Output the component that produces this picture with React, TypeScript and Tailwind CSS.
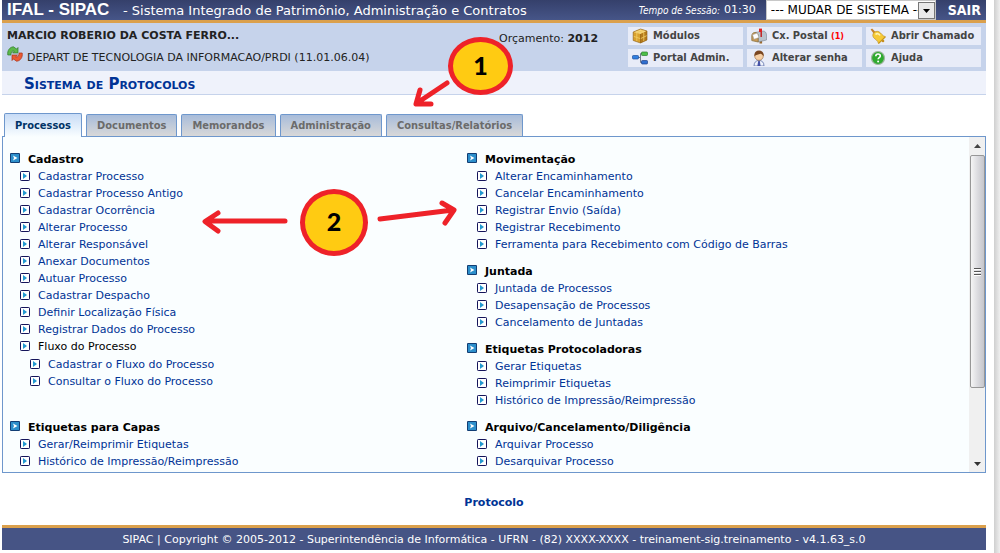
import type { ReactNode } from "react";

type MenuItem = {
  label: string;
  children?: string[];
};

type MenuGroup = {
  title: string;
  items: MenuItem[];
};

const tabs = ["Processos", "Documentos", "Memorandos", "Administração", "Consultas/Relatórios"];

const cadastro: MenuGroup = {
  title: "Cadastro",
  items: [
    { label: "Cadastrar Processo" },
    { label: "Cadastrar Processo Antigo" },
    { label: "Cadastrar Ocorrência" },
    { label: "Alterar Processo" },
    { label: "Alterar Responsável" },
    { label: "Anexar Documentos" },
    { label: "Autuar Processo" },
    { label: "Cadastrar Despacho" },
    { label: "Definir Localização Física" },
    { label: "Registrar Dados do Processo" },
    {
      label: "Fluxo do Processo",
      children: ["Cadastrar o Fluxo do Processo", "Consultar o Fluxo do Processo"],
    },
  ],
};

const movimentacao: MenuGroup = {
  title: "Movimentação",
  items: [
    { label: "Alterar Encaminhamento" },
    { label: "Cancelar Encaminhamento" },
    { label: "Registrar Envio (Saída)" },
    { label: "Registrar Recebimento" },
    { label: "Ferramenta para Recebimento com Código de Barras" },
  ],
};

const juntada: MenuGroup = {
  title: "Juntada",
  items: [
    { label: "Juntada de Processos" },
    { label: "Desapensação de Processos" },
    { label: "Cancelamento de Juntadas" },
  ],
};

const protocoladoras: MenuGroup = {
  title: "Etiquetas Protocoladoras",
  items: [
    { label: "Gerar Etiquetas" },
    { label: "Reimprimir Etiquetas" },
    { label: "Histórico de Impressão/Reimpressão" },
  ],
};

const capas: MenuGroup = {
  title: "Etiquetas para Capas",
  items: [{ label: "Gerar/Reimprimir Etiquetas" }, { label: "Histórico de Impressão/Reimpressão" }],
};

const arquivo: MenuGroup = {
  title: "Arquivo/Cancelamento/Diligência",
  items: [{ label: "Arquivar Processo" }, { label: "Desarquivar Processo" }],
};

function GroupIcon() {
  return (
    <svg viewBox="0 0 10 10" className="mb-0.5 h-2.5 w-2.5 shrink-0" aria-hidden="true">
      <rect width="10" height="10" rx="1" fill="#123e74" />
      <rect x="1" y="1" width="8" height="8" fill="#2c8fcb" />
      <path d="M3 2.500 7.500 5 3 7.500 4 5z" fill="#fff" />
    </svg>
  );
}

function ItemIcon() {
  return (
    <svg viewBox="0 0 10 10" className="mb-px h-2.5 w-2.5 shrink-0" aria-hidden="true">
      <rect x="0.5" y="0.5" width="9" height="9" rx="0.7" fill="#fff" stroke="#14145a" />
      <path d="M3 2v6l4-3z" fill="#2298cf" />
    </svg>
  );
}

function BoxIcon() {
  return (
    <svg viewBox="0 0 16 16" className="h-4 w-4 shrink-0" aria-hidden="true">
      <path d="M1.200 4 8.500 1 15 3v9l-6.500 3L1.200 12.500z" fill="#d9a12e" />
      <path d="M1.200 4 8.500 1 15 3 8.500 6z" fill="#f5d680" />
      <path d="M8.500 6 15 3v9l-6.500 3z" fill="#b47a1c" />
      <path d="M4.800 2.500 11.800 4.500v9M11.500 2 4.800 5v8.700M1.200 8.200l7.300 2.500L15 7.500" fill="none" stroke="#f1cb62" strokeWidth="0.900" />
      <path d="M1.200 4 8.500 1 15 3v9l-6.500 3L1.200 12.500zM8.500 6v9" fill="none" stroke="#8a5a12" strokeWidth="0.600" />
    </svg>
  );
}

function MailboxIcon() {
  return (
    <svg viewBox="0 0 16 16" className="h-4 w-4 shrink-0" aria-hidden="true">
      <path d="M8.500 11.500h2.600v4H8.500z" fill="#9b6a2f" />
      <path d="M4 4.500 12 3c2 0 3.500 1.600 3.500 4v5L7 14V7z" fill="#b9c2cc" stroke="#7c8793" strokeWidth="0.600" />
      <path d="M.8 8C.8 5.800 2 4.500 4 4.500S7.200 6 7.200 8v6L.8 12.600z" fill="#c99a58" stroke="#8b7340" strokeWidth="0.800" />
      <path d="m1.500 6.800 4.800-1.800 1.700 4.500-5 1.800z" fill="#fff" stroke="#999" strokeWidth="0.500" />
      <path d="M10.200 9V1" stroke="#c01818" strokeWidth="1.400" />
      <path d="M8 .6h3v3.400H8z" fill="#e02020" />
    </svg>
  );
}

function BellIcon() {
  return (
    <svg viewBox="0 0 16 16" className="h-4 w-4 shrink-0" aria-hidden="true">
      <path d="m.6 1.600 1.500-1L5.500 4 3.800 5.800z" fill="#c4822a" />
      <path d="M3.300 5.500C4.500 3.400 7 2.800 9 3.800c2.600 1.400 2.800 3.800 6.500 5L8.500 15.600C7.800 12 5 11.600 3.600 9.600c-.9-1.300-1.100-2.800-.3-4.100z" fill="#f6ca36" stroke="#b4841a" strokeWidth="0.600" />
      <path d="M5.500 6.500C7 5 9 5.500 10 7.500" fill="none" stroke="#fff3ae" strokeWidth="1.600" />
      <path d="m15.300 8.900-6.700 6.500" stroke="#c8961c" strokeWidth="1.200" />
      <circle cx="13" cy="13" r="1.300" fill="#c58f1f" />
    </svg>
  );
}

function NetworkIcon() {
  return (
    <svg viewBox="0 0 16 16" className="h-4 w-4 shrink-0" aria-hidden="true">
      <path d="M6 7.500h2.500M10 3.500H8.500v9H10" fill="none" stroke="#6f7b8c" />
      <rect x="0.500" y="5.500" width="6" height="3.500" rx="0.800" fill="#2f7fe0" stroke="#1f4f9e" strokeWidth="0.700" />
      <rect x="9.500" y="2" width="6" height="3.500" rx="0.800" fill="#4cc04a" stroke="#2b7d2c" strokeWidth="0.700" />
      <rect x="9.500" y="10.500" width="6" height="3.500" rx="0.800" fill="#2f6fcf" stroke="#1f3f86" strokeWidth="0.700" />
    </svg>
  );
}

function UserIcon() {
  return (
    <svg viewBox="0 0 16 16" className="h-4 w-4 shrink-0" aria-hidden="true">
      <path d="M3 16c0-3.600 2-5.600 5-5.600s5 2 5 5.600z" fill="#eef2fb" stroke="#5b6ea8" strokeWidth="0.800" />
      <path d="M7.200 11h1.600l.8 5H6.400z" fill="#4552a8" />
      <circle cx="8" cy="6" r="4.300" fill="#f6cfa5" stroke="#9a6a3e" strokeWidth="0.600" />
      <path d="M3.500 6.200C3 2.500 5 .5 8 .5s5.200 2 4.600 5.700C11.500 5 10.500 3.800 9.500 3.800 7.500 5 5 4.300 3.500 6.200z" fill="#7a4620" />
    </svg>
  );
}

function HelpIcon() {
  return (
    <svg viewBox="0 0 16 16" className="h-4 w-4 shrink-0" aria-hidden="true">
      <circle cx="8" cy="8" r="6.500" fill="#2faa2f" stroke="#9fb59f" strokeWidth="1.200" />
      <path d="M5.800 6.200C5.800 4.800 6.800 4 8 4s2.300.8 2.300 2c0 1.600-2.200 1.600-2.200 3.300" fill="none" stroke="#fff" strokeWidth="1.600" />
      <circle cx="8.100" cy="11.500" r="1" fill="#fff" />
    </svg>
  );
}

function SwapIcon() {
  return (
    <svg viewBox="0 0 16 16" className="mb-2 h-4 w-4 shrink-0" aria-hidden="true">
      <path d="M.8 9C0 4.500 3 .8 6.500.8L9.500 3 11 1.500V7H5.500L7.300 5.200C5.300 4.500 3.800 6 4 9z" fill="#5cb84a" stroke="#2f7a2a" strokeWidth="0.700" />
      <path d="M15.200 7c.8 4.500-2.200 8.200-5.700 8.200L6.500 13 5 14.500V9h5.500l-1.800 1.800c2 .7 3.500-.8 3.300-3.800z" fill="#ea5a34" stroke="#a83218" strokeWidth="0.700" />
    </svg>
  );
}

function ShortcutButton({ icon, children }: { icon: ReactNode; children: ReactNode }) {
  return (
    <a
      href="#"
      className="flex h-[18px] items-center gap-[5px] bg-[#e8ecf8] pl-1 font-['DejaVu_Sans_Condensed','DejaVu_Sans',sans-serif] text-[11px] font-bold whitespace-nowrap text-[#444444]"
    >
      {icon}
      <span>{children}</span>
    </a>
  );
}

function MenuSection({ group }: { group: MenuGroup }) {
  return (
    <section className="mb-[9px]">
      <h2 className="flex h-[18px] items-center gap-2 font-bold text-black">
        <GroupIcon />
        <span className="pt-0.5">{group.title}</span>
      </h2>
      <ul className="pl-2.5">
        {group.items.map((item) => (
          <li key={item.label}>
            <div className="flex h-[17px] items-center gap-2">
              <ItemIcon />
              {item.children ? (
                <span className="pt-0.5 text-black">{item.label}</span>
              ) : (
                <a href="#" className="pt-0.5">
                  {item.label}
                </a>
              )}
            </div>
            {item.children && (
              <ul className="pt-px pl-2.5">
                {item.children.map((child) => (
                  <li key={child} className="flex h-[17px] items-center gap-2">
                    <ItemIcon />
                    <a href="#" className="pt-0.5">
                      {child}
                    </a>
                  </li>
                ))}
              </ul>
            )}
          </li>
        ))}
      </ul>
    </section>
  );
}

function Scrollbar() {
  return (
    <div className="flex w-4 shrink-0 flex-col items-center bg-[#f0f0f0]" aria-hidden="true">
      <div className="flex h-[18px] items-center">
        <svg viewBox="0 0 7 4" className="h-1 w-[7px]">
          <path d="M0 4 3.500 0 7 4z" fill="#444" />
        </svg>
      </div>
      <div className="flex h-[233px] w-[15px] flex-col items-center justify-center gap-px rounded-xs border border-[#979797] bg-linear-to-r from-[#f5f5f5] via-[#dcdce0] to-[#c6c6cb]">
        <span className="h-0.5 w-[7px] border-b border-white bg-[#555555]" />
        <span className="h-0.5 w-[7px] border-b border-white bg-[#555555]" />
        <span className="h-0.5 w-[7px] border-b border-white bg-[#555555]" />
      </div>
      <div className="mt-auto flex h-[17px] items-center">
        <svg viewBox="0 0 7 4" className="h-1 w-[7px]">
          <path d="M0 0h7L3.500 4z" fill="#333" />
        </svg>
      </div>
    </div>
  );
}

// Tutorial marks drawn on top of the page
function Annotations() {
  return (
    <div className="pointer-events-none absolute top-0 left-0">
      <svg width="530" height="260" viewBox="0 0 530 260" fill="none" stroke="#ee2229" strokeWidth="5" strokeLinecap="round" strokeLinejoin="round">
        <path d="M447 83 417 103M420 90 416 104 431 104" />
        <path d="M285 221H206M218 213 205 221.500 218 231" />
        <path d="M380 219 453 210M442 203 454 210 445 223" />
      </svg>
      <div className="absolute top-[37px] left-[448px] flex h-[58px] w-[65px] items-center justify-center rounded-[50%] border-5 border-[#ee2229] bg-[#ffcb12] pb-px font-[Lato,sans-serif] text-[25px] font-black text-black">
        1
      </div>
      <div className="absolute top-[189px] left-[300px] flex h-[67px] w-[68px] items-center justify-center rounded-[50%] border-5 border-[#ee2229] bg-[#ffcb12] pb-px font-[Lato,sans-serif] text-[25px] font-black text-black">
        2
      </div>
    </div>
  );
}

export default function App() {
  return (
    <div className="relative flex bg-white font-['DejaVu_Sans',sans-serif] text-[11px] text-[#003395]">
      <div className="min-w-0 flex-1 pr-2 pb-[3px] pl-0.5">
        <header>
          <div className="flex h-[23px] items-center border-b-3 border-[#dba04c] bg-linear-to-b from-[#35406b] to-[#465588] pr-[5px] pl-[5px] whitespace-nowrap text-white">
            <h1 className="w-[116px] font-['Liberation_Sans',sans-serif] text-[17px] font-bold">IFAL - SIPAC</h1>
            <span className="pt-0.5 text-[13px]">- Sistema Integrado de Patrimônio, Administração e Contratos</span>
            <span className="ml-auto flex items-center gap-1">
              <em className="font-['DejaVu_Sans_Condensed','DejaVu_Sans',sans-serif] text-[10px]">Tempo de Sessão:</em>
              <span>01:30</span>
            </span>
            <div className="relative ml-2.5 h-5 w-[170px]">
              <select
                aria-label="Mudar de sistema"
                className="h-5 w-full appearance-none border border-[#c8c8c8] bg-white pl-1 text-xs text-black"
              >
                <option>--- MUDAR DE SISTEMA ---</option>
              </select>
              <span className="pointer-events-none absolute top-0.5 right-px flex h-[17px] w-[17px] items-center justify-center border border-[#777777] bg-[#e9e9e9]">
                <svg viewBox="0 0 7 4" className="h-1 w-[7px]" aria-hidden="true">
                  <path d="M0 0h7L3.500 4z" fill="#000" />
                </svg>
              </span>
            </div>
            <a href="#" className="ml-3 font-['DejaVu_Sans_Condensed','DejaVu_Sans',sans-serif] text-sm font-bold">
              SAIR
            </a>
          </div>

          <div className="flex h-12 bg-[#c6d3eb] pr-[5px] text-[#222222]">
            <div className="w-[492px] pl-[5px] whitespace-nowrap">
              <p className="flex h-6 items-center pt-0.5 font-bold">MARCIO ROBERIO DA COSTA FERRO...</p>
              <p className="flex h-5 items-center gap-1 pt-0.5">
                <SwapIcon />
                DEPART DE TECNOLOGIA DA INFORMACAO/PRDI (11.01.06.04)
              </p>
            </div>
            <p className="pt-2 pl-[5px] whitespace-nowrap">
              Orçamento: <strong>2012</strong>
            </p>
            <nav className="ml-auto grid w-[353px] grid-cols-3 content-start gap-1 pt-1">
              <ShortcutButton icon={<BoxIcon />}>Módulos</ShortcutButton>
              <ShortcutButton icon={<MailboxIcon />}>
                Cx. Postal <small className="text-[9px] text-[#ff0000]">(1)</small>
              </ShortcutButton>
              <ShortcutButton icon={<BellIcon />}>Abrir Chamado</ShortcutButton>
              <ShortcutButton icon={<NetworkIcon />}>Portal Admin.</ShortcutButton>
              <ShortcutButton icon={<UserIcon />}>Alterar senha</ShortcutButton>
              <ShortcutButton icon={<HelpIcon />}>Ajuda</ShortcutButton>
            </nav>
          </div>

          <h2 className="flex h-6 items-center border-b border-[#c6d3eb] bg-[#eff2fb] pt-1 pl-[22px] text-[15px] font-bold [font-variant:small-caps]">
            Sistema de Protocolos
          </h2>
        </header>

        <main className="pt-[18px]">
          <div role="tablist" className="flex items-end gap-1 pl-0.5">
            {tabs.map((tab, i) => (
              <button
                key={tab}
                type="button"
                role="tab"
                aria-selected={i === 0}
                className={
                  i === 0
                    ? "relative -mb-px h-6 rounded-t-xs border border-b-0 border-[#6e97cc] bg-linear-to-b from-[#c8dcf6] to-[#fafeff] px-2.5 pt-0.5 font-['DejaVu_Sans_Condensed','DejaVu_Sans',sans-serif] font-bold text-[#003366]"
                    : "h-[22px] rounded-t-xs border border-b-0 border-[#6e97cc] bg-linear-to-b from-[#a8bcda] to-[#d8d8d8] px-2.5 pt-0.5 font-['DejaVu_Sans_Condensed','DejaVu_Sans',sans-serif] font-bold text-[#6b6b6b]"
                }
              >
                {tab}
              </button>
            ))}
          </div>

          <div role="tabpanel" className="flex border border-[#6e97cc] bg-[#fafeff]">
            <div className="grid flex-1 grid-cols-[457fr_509fr] pt-[13px]">
              <div className="pl-[7px]">
                <MenuSection group={cadastro} />
              </div>
              <div className="pl-[7px]">
                <MenuSection group={movimentacao} />
                <MenuSection group={juntada} />
                <MenuSection group={protocoladoras} />
              </div>
              <div className="-mb-[7px] pl-[7px]">
                <MenuSection group={capas} />
              </div>
              <div className="-mb-[7px] pl-[7px]">
                <MenuSection group={arquivo} />
              </div>
            </div>
            <Scrollbar />
          </div>

          <p className="flex h-[52px] items-center justify-center pt-2 font-bold">
            <a href="#">Protocolo</a>
          </p>
        </main>

        <footer className="flex h-[25px] items-center justify-center border-t-3 border-[#dba04c] bg-[#465485] pt-0.5 text-[11px] text-white">
          SIPAC | Copyright © 2005-2012 - Superintendência de Informática - UFRN - (82) XXXX-XXXX - treinament-sig.treinamento - v4.1.63_s.0
        </footer>
      </div>
      <div className="w-1.5 shrink-0 bg-linear-to-r from-[#cfcfcf] to-[#efefef]" />
      <Annotations />
    </div>
  );
}
